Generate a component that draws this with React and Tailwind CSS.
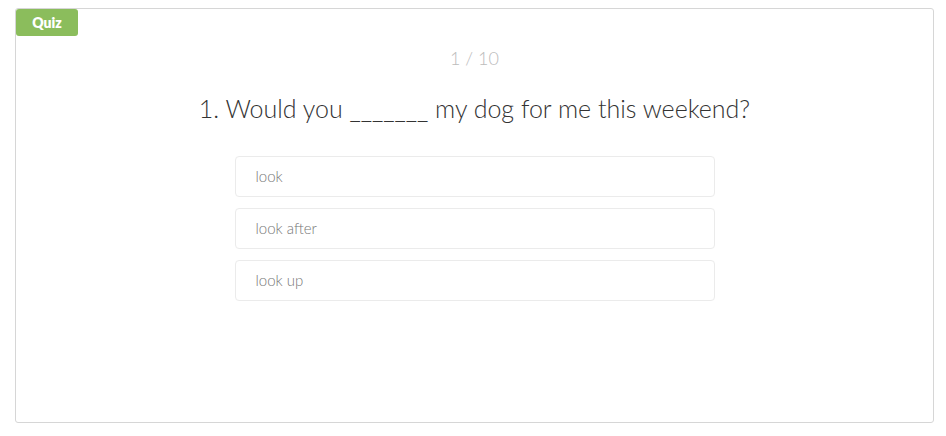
import React from "react";

const options = ["look", "look after", "look up"];

const App = () => {
  return (
    <div className="w-[946px] h-[436px] bg-white pt-2 pl-[15px] pr-3" style={{ fontFamily: '"Lato", "Open Sans", sans-serif' }}>
      <div className="relative h-[415px] border border-[#d6d6d6] rounded-[3px] flex flex-col items-center">
        {/* Quiz badge */}
        <div className="absolute left-0 top-0 w-[62px] h-[27px] bg-[#8bbd5c] rounded-[3px] flex items-center justify-center text-white text-[14px] font-extrabold">
          Quiz
        </div>

        <div className="mt-[37px] text-[18px] font-light text-[#bcbcbc] leading-6">1 / 10</div>

        <h1 className="mt-[22px] text-[25px] font-light text-[#333] leading-8">
          1. Would you _______ my dog for me this weekend?
        </h1>

        <div className="mt-[32px] w-[480px] flex flex-col gap-[11px]">
          {options.map((opt) => (
            <div
              key={opt}
              className="h-[41px] border border-[#ebebeb] rounded-[4px] px-5 flex items-center text-[15px] font-light text-[#777]"
            >
              {opt}
            </div>
          ))}
        </div>
      </div>
    </div>
  );
};

export default App;
